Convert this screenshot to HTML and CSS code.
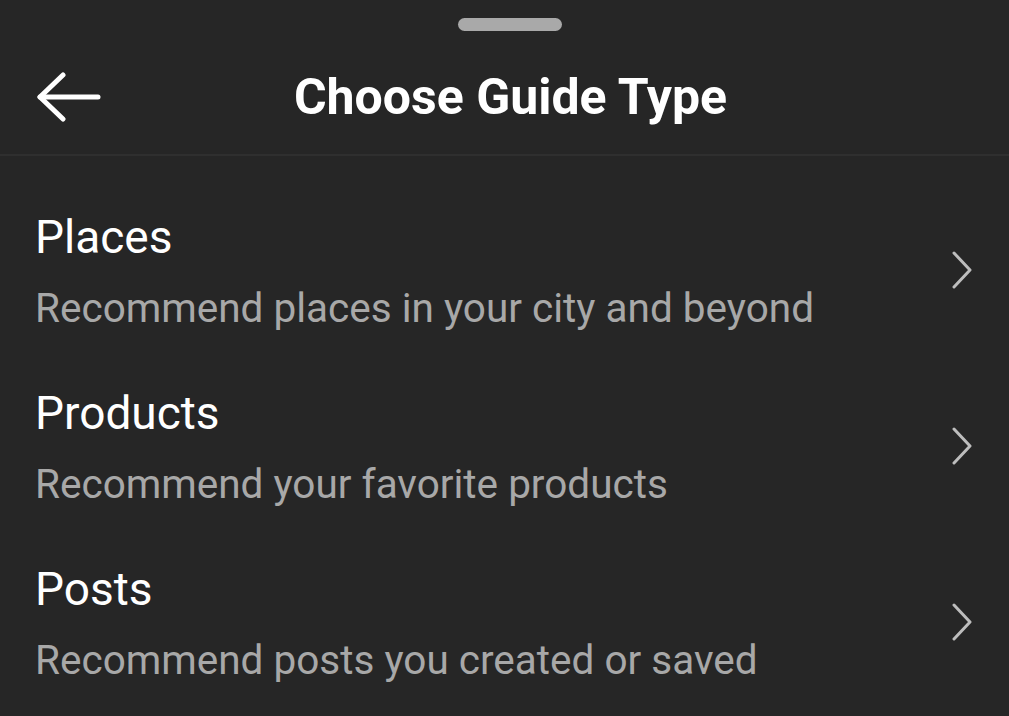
FILE: index.html
```html
<!DOCTYPE html>
<html>
<head>
<meta charset="utf-8">
<link rel="stylesheet" href="styles.css">
</head>
<body>
<div class="sheet">
  <div class="handle-row"><div class="handle"></div></div>
  <header class="topbar">
    <svg class="back" width="66" height="50" viewBox="0 0 66 50" fill="none" stroke="#fff" stroke-width="5" stroke-linecap="round" stroke-linejoin="round">
      <path d="M27 3 L4 25 L27 47"/>
      <path d="M4 25 L62 25"/>
    </svg>
    <h1 class="title">Choose Guide Type</h1>
  </header>
  <ul class="list">
    <li class="item">
      <div class="texts">
        <div class="name">Places</div>
        <div class="desc">Recommend places in your city and beyond</div>
      </div>
      <svg class="chev" width="24" height="38" viewBox="0 0 24 38" fill="none" stroke="#bdbdbd" stroke-width="3" stroke-linecap="round" stroke-linejoin="round"><path d="M4 2 L20 19 L4 36"/></svg>
    </li>
    <li class="item">
      <div class="texts">
        <div class="name">Products</div>
        <div class="desc">Recommend your favorite products</div>
      </div>
      <svg class="chev" width="24" height="38" viewBox="0 0 24 38" fill="none" stroke="#bdbdbd" stroke-width="3" stroke-linecap="round" stroke-linejoin="round"><path d="M4 2 L20 19 L4 36"/></svg>
    </li>
    <li class="item">
      <div class="texts">
        <div class="name">Posts</div>
        <div class="desc">Recommend posts you created or saved</div>
      </div>
      <svg class="chev" width="24" height="38" viewBox="0 0 24 38" fill="none" stroke="#bdbdbd" stroke-width="3" stroke-linecap="round" stroke-linejoin="round"><path d="M4 2 L20 19 L4 36"/></svg>
    </li>
  </ul>
</div>
</body>
</html>
```
FILE: styles.css
```css
html, body {
  margin: 0;
  padding: 0;
  background: #262626;
}
body {
  font-family: Roboto, "Liberation Sans", sans-serif;
  color: #fff;
  width: 1009px;
  height: 716px;
  overflow: hidden;
}
.sheet {
  display: flex;
  flex-direction: column;
}
.handle-row {
  display: flex;
  justify-content: center;
  padding-top: 18px;
  padding-left: 11px;
}
.handle {
  width: 104px;
  height: 13px;
  border-radius: 7px;
  background: #a9a9a9;
}
.topbar {
  position: relative;
  height: 125px;
  display: flex;
  align-items: center;
  justify-content: center;
  padding-left: 12px;
  border-bottom: 2px solid #2f2f2f;
  box-sizing: border-box;
}
.back {
  position: absolute;
  left: 36px;
  top: 41px;
}
.title {
  margin: 9px 0 0 0;
  font-size: 50px;
  line-height: 58px;
  font-weight: 700;
}
.list {
  list-style: none;
  margin: 26px 0 0 0;
  padding: 0;
}
.item {
  display: flex;
  align-items: center;
  justify-content: space-between;
  height: 176px;
  padding: 0 35px 0 35px;
  box-sizing: border-box;
}
.texts {
  display: flex;
  flex-direction: column;
  gap: 19px;
}
.name {
  font-size: 46px;
  line-height: 56px;
  color: #fff;
}
.desc {
  font-size: 40.5px;
  line-height: 48px;
  color: #a8a8a8;
}
.chev {
  display: block;
}
```
